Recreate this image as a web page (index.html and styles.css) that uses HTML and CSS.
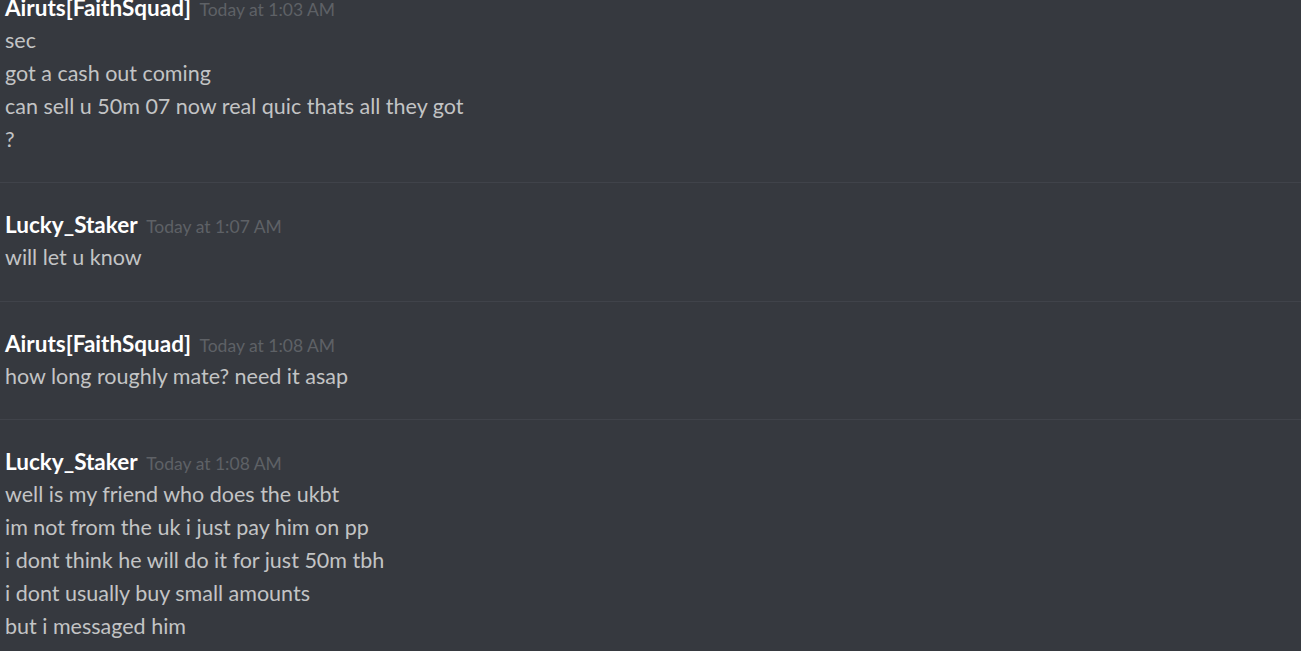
FILE: index.html
```html
<!DOCTYPE html>
<html lang="en">
<head>
    <meta charset="UTF-8">
    <meta name="viewport" content="width=device-width, initial-scale=1.0">
    <title>Chat</title>
    <link rel="stylesheet" href="styles.css">
</head>
<body>

    <div class="chat">
        <div class="message first">
            <div class="header"><span class="name">Airuts[FaithSquad]</span> <span class="time">Today at 1:03 AM</span></div>
            <div class="line">sec</div>
            <div class="line">got a cash out coming</div>
            <div class="line">can sell u 50m 07 now real quic thats all they got</div>
            <div class="line">?</div>
        </div>

        <div class="message">
            <div class="header"><span class="name">Lucky_Staker</span> <span class="time">Today at 1:07 AM</span></div>
            <div class="line">will let u know</div>
        </div>

        <div class="message">
            <div class="header"><span class="name">Airuts[FaithSquad]</span> <span class="time">Today at 1:08 AM</span></div>
            <div class="line">how long roughly mate? need it asap</div>
        </div>

        <div class="message">
            <div class="header"><span class="name">Lucky_Staker</span> <span class="time">Today at 1:08 AM</span></div>
            <div class="line">well is my friend who does the ukbt</div>
            <div class="line">im not from the uk i just pay him on pp</div>
            <div class="line">i dont think he will do it for just 50m tbh</div>
            <div class="line">i dont usually buy small amounts</div>
            <div class="line">but i messaged him</div>
        </div>
    </div>

</body>
</html>
```

FILE: styles.css
```css
html, body { margin: 0; height: 100%; background: #36393f; overflow: hidden; }
body { font-family: Lato, "Liberation Sans", sans-serif; font-size: 21.5px; line-height: 33px; color: #c3c4c5; }
.message { padding: 25px 5px 26.5px; border-bottom: 1px solid #40434a; }
.message.first { padding-top: 0; margin-top: -9.5px; }
.header { height: 33px; white-space: nowrap; }
.name { color: #fff; font-weight: 700; font-size: 22.5px; }
.time { color: #5e6166; font-size: 17.5px; line-height: 1; margin-left: 3px; }
```
